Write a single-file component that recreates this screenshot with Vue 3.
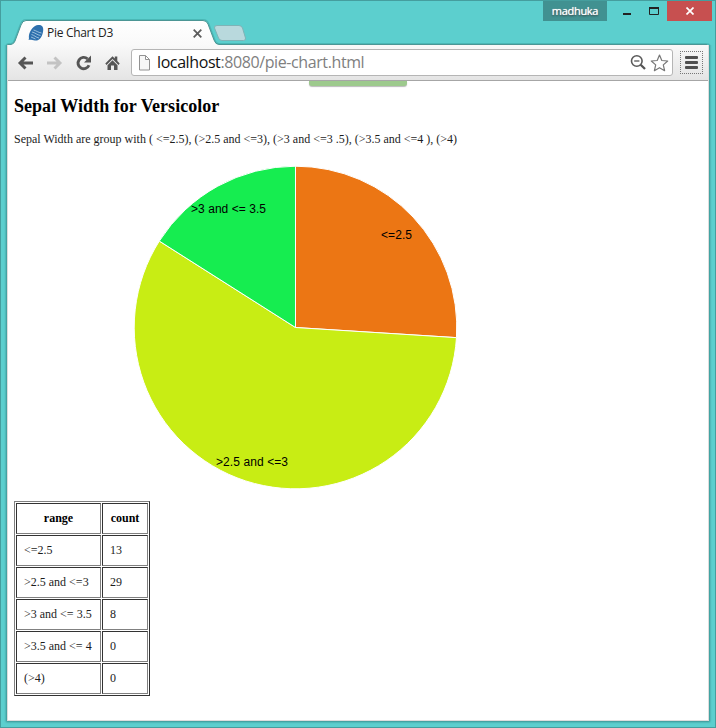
<script setup>
const cx = 161.5
const cy = 161.5
const r = 161.3
const slices = [
  { label: '<=2.5', value: 13, color: '#ec7614', x: 247, y: 73, w: 31 },
  { label: '>2.5 and <=3', value: 29, color: '#c8ed14', x: 82, y: 300, w: 72 },
  { label: '>3 and <= 3.5', value: 8, color: '#16ed50', x: 57, y: 47, w: 75 },
]
const total = slices.reduce((s, d) => s + d.value, 0)
const point = (v) => {
  const a = (v / total) * Math.PI * 2
  return `${(cx + r * Math.sin(a)).toFixed(3)} ${(cy - r * Math.cos(a)).toFixed(3)}`
}
let acc = 0
const arcs = slices.map((s) => {
  const start = acc
  acc += s.value
  const large = s.value / total > 0.5 ? 1 : 0
  return { ...s, d: `M${cx} ${cy}L${point(start)}A${r} ${r} 0 ${large} 1 ${point(acc)}Z` }
})
const rows = [
  ['<=2.5', 13],
  ['>2.5 and <=3', 29],
  ['>3 and <= 3.5', 8],
  ['>3.5 and <= 4', 0],
  ['(>4)', 0],
]
</script>

<template>
  <div class="window">
    <header class="strip">
      <svg class="tabs" width="716" height="45" viewBox="0 0 716 45">
        <defs>
          <linearGradient id="tabfill" x1="0" y1="0" x2="0" y2="1">
            <stop offset="0" stop-color="#fff" />
            <stop offset="1" stop-color="#f9f9f9" />
          </linearGradient>
        </defs>
        <path d="M217 25.500H239Q241.500 25.500 242.500 28L245.500 38Q246 40.500 243.500 40.500H222Q219.500 40.500 218.500 38L214.500 28Q214 25.500 217 25.500Z" fill="#b9d9dd" stroke="#7fb3b6" />
        <path d="M7 47V46Q7 44.500 9 44.500H11Q14 44 15 41L21 25Q22.500 20.500 26 20.500H203Q206.500 20.500 208 24L214 40Q215.500 44.500 219 44.500H706Q709.500 44.500 709.500 47" fill="none" stroke="#359b9a" stroke-opacity=".45" stroke-width="3" />
        <path d="M7 46V45.500Q7.500 44.500 9 44.500H11Q14 44 15 41L21 25Q22.500 20.500 26 20.500H203Q206.500 20.500 208 24L214 40Q215.500 44.500 219 44.500V46Z" fill="url(#tabfill)" />
        <path d="M7.500 44.500H11Q14 44 15 41L21 25Q22.500 20.500 26 20.500H203Q206.500 20.500 208 24L214 40Q215.500 44.500 219 44.500H707" fill="none" stroke="#4c9695" />
      </svg>
      <div class="tab">
        <svg width="16" height="18" viewBox="0 0 16 18">
          <path d="M.5 16C1.500 15 .5 13 1 11C2 6 6 1.500 10 1C14 .5 16 3 15 8C14 13.500 11 17 7 16.500C4.500 16.500 3 15.500 .5 16Z" fill="#2e70ad" />
          <path d="M3.500 10.500C6 11 8 13.500 11 14M4 8C7 8.500 9 11 12.500 11.500M5.500 6C8 6.500 10 8.500 13.500 9M3 13L7.500 15" stroke="#b4d0e8" stroke-width=".8" fill="none" />
        </svg>
        <span class="title">Pie Chart D3</span>
        <svg class="close-tab" width="9" height="9" viewBox="0 0 9 9"><path d="M.7 .7L8.300 8.300M8.300 .7L.7 8.300" stroke="#5c5c5c" stroke-width="1.800" /></svg>
      </div>
      <div class="controls">
        <span class="user">madhuka</span>
        <svg class="min" width="8" height="2"><path d="M0 1H8" stroke="#222" stroke-width="2" /></svg>
        <svg class="max" width="10" height="8"><path d="M0 1H10M.5 1V7.500H9.500V1" fill="none" stroke="#222" /><path d="M0 1H10" stroke="#222" stroke-width="2" /></svg>
        <span class="close"><svg width="8" height="8" viewBox="0 0 8 8"><path d="M.5 .5L7.500 7.500M7.500 .5L.5 7.500" stroke="#fff" stroke-width="1.700" /></svg></span>
      </div>
    </header>

    <div class="body">
      <nav class="toolbar">
        <svg class="nav" width="116" height="20" viewBox="0 0 116 20">
          <path d="M18 10H5M10.500 4.500L5 10L10.500 15.500" fill="none" stroke="#555" stroke-width="2.900" />
          <path d="M32 10H45M39.500 4.500L45 10L39.500 15.500" fill="none" stroke="#c3c3c3" stroke-width="2.900" />
          <path d="M72.500 5.800A5.700 5.700 0 1 0 74 12.300" fill="none" stroke="#555" stroke-width="2.900" />
          <path d="M76 2.500V9.500H69Z" fill="#555" />
          <path d="M90.300 10.500L97.500 3.200L99.800 5.500V3.500H102.300V8L104.700 10.500L103.500 12L97.500 6L91.500 12Z" fill="#555" />
          <path d="M92.500 12.200L97.500 7.200L102.500 12.200V17H99V12.500H96V17H92.500Z" fill="#555" />
        </svg>
        <div class="omnibox">
          <svg width="13" height="16" viewBox="0 0 13 16"><path d="M1.500 .5H7.500L11.500 4.500V15H1.500ZM7.500 .5V4.500H11.500" fill="#f7f7f7" stroke="#929292" /></svg>
          <span class="url">localhost<i>:8080/pie-chart.html</i></span>
          <svg class="lens" width="16" height="17" viewBox="0 0 16 17"><circle cx="6.800" cy="7" r="5.300" fill="none" stroke="#5b5b5b" stroke-width="1.600" /><path d="M4.200 7H9.400" stroke="#555" stroke-width="1.300" /><path d="M10.700 10.700L15 15" stroke="#555" stroke-width="2.300" /></svg>
          <svg class="star" width="19" height="18" viewBox="0 0 19 18"><path d="M9.500 1L11.800 6.500L17.700 7L13.300 10.900L14.600 16.700L9.500 13.700L4.400 16.700L5.700 10.900L1.300 7L7.200 6.500Z" fill="#fff" stroke="#777" stroke-width="1.200" stroke-linejoin="round" /></svg>
        </div>
        <div class="menu"><b></b><b></b><b></b></div>
      </nav>

      <main class="page">
        <div class="notch"></div>
        <h1>Sepal Width for Versicolor</h1>
        <p>Sepal Width are group with ( &lt;=2.5), (&gt;2.5 and &lt;=3), (&gt;3 and &lt;=3 .5), (&gt;3.5 and &lt;=4 ), (&gt;4)</p>
        <svg class="pie" width="323" height="323" viewBox="0 0 323 323">
          <path v-for="a in arcs" :key="a.label" :d="a.d" :fill="a.color" stroke="#fff" />
          <text v-for="a in arcs" :key="'t' + a.label" :x="a.x" :y="a.y" :textLength="a.w">{{ a.label }}</text>
        </svg>
        <table>
          <thead><tr><th class="range">range</th><th>count</th></tr></thead>
          <tbody>
            <tr v-for="row in rows" :key="row[0]"><td>{{ row[0] }}</td><td>{{ row[1] }}</td></tr>
          </tbody>
        </table>
      </main>
    </div>
  </div>
</template>

<style scoped>
.window {
  box-sizing: border-box;
  width: 716px;
  height: 728px;
  background: #5ccfce;
  box-shadow: inset 0 0 0 1px #459e9e;
  overflow: hidden;
}
.strip { position: relative; display: flex; height: 45px; }
.tabs { position: absolute; left: 0; top: 0; }
.tab {
  position: relative;
  display: flex;
  align-items: center;
  width: 174px;
  height: 24px;
  padding: 21px 0 0 28px;
}
.title { margin-left: 3px; font: 12px/16px "Open Sans", sans-serif; letter-spacing: -0.3px; color: #222; white-space: nowrap; }
.close-tab { margin-left: auto; }
.controls { display: flex; height: 20px; margin: 1px 4px 0 auto; align-items: center; }
.user {
  width: 64px;
  height: 20px;
  background: #419191;
  color: #fff;
  font: 11px/20px "Open Sans", sans-serif;
  letter-spacing: -0.3px;
  text-align: center;
  text-shadow: 0 0 1px #fff, 0 1px 2px #222;
}
.min { margin: 5px 18px 0 16px; }
.max { margin-right: 8px; }
.close { display: flex; width: 45px; height: 20px; align-items: center; justify-content: center; background: #c75050; }
.body {
  display: flex;
  flex-direction: column;
  box-sizing: border-box;
  width: 702px;
  height: 676px;
  margin-left: 7px;
  border: solid #ddd;
  border-width: 0 1px 1px;
  box-shadow: 0 0 2px 1px #398e8e;
  clip-path: inset(0 -4px -4px -4px);
  background: #fff;
}
.toolbar {
  display: flex;
  align-items: center;
  box-sizing: border-box;
  height: 36px;
  border-bottom: 1px solid #a6a6a6;
  background: linear-gradient(#f9f9f9, #e4e4e4);
}
.nav { margin-left: 7px; }
.omnibox {
  display: flex;
  align-items: center;
  box-sizing: border-box;
  width: 542px;
  height: 27px;
  padding-left: 6px;
  border: 1px solid #b5b5b5;
  border-radius: 3px;
  background: #fff;
}
.url { margin-left: 6px; font: 16px/24px "Open Sans", sans-serif; letter-spacing: -0.4px; color: #111; white-space: nowrap; position: relative; top: -1px; }
.url i { font-style: normal; color: #808080; }
.lens { margin-left: auto; }
.star { margin: 0 3px 0 4px; }
.menu {
  display: flex;
  flex-direction: column;
  justify-content: center;
  gap: 2px;
  box-sizing: border-box;
  width: 23px;
  height: 23px;
  margin-left: 7px;
  border: 1px dotted #777;
}
.menu b { width: 13px; height: 3px; margin: 0 auto; border-radius: 1px; background: #505050; }
.page { flex: 1; padding-left: 6px; font-family: "Liberation Serif", serif; color: #000; }
.notch { width: 98px; height: 5px; margin-left: 295px; border-radius: 0 0 3px 3px; background: #9dca8d; box-shadow: 0 1px 1px #bbb; }
h1 { margin: 10px 0 0; font-size: 18px; line-height: 20px; font-weight: bold; letter-spacing: 0.03px; white-space: nowrap; }
p { margin: 16px 0 0; font-size: 12px; line-height: 14px; color: #1c1c1c; white-space: nowrap; }
.pie { display: block; margin: 20px 0 0 120px; overflow: visible; }
.pie text { font: 12px "Liberation Sans", sans-serif; fill: #000; }
table {
  margin-top: 12px;
  width: 136px;
  border: 1px solid;
  border-color: #808080 #333 #333 #808080;
  border-collapse: separate;
  border-spacing: 1px;
  font-size: 12px;
  line-height: 15px;
}
th, td {
  box-sizing: border-box;
  height: 31px;
  padding: 7px;
  border: 1px solid;
  border-color: #333 #808080 #808080 #333;
  text-align: left;
  white-space: nowrap;
}
td { color: #1c1c1c; }
th { text-align: center; }
.range { width: 85px; }
</style>
